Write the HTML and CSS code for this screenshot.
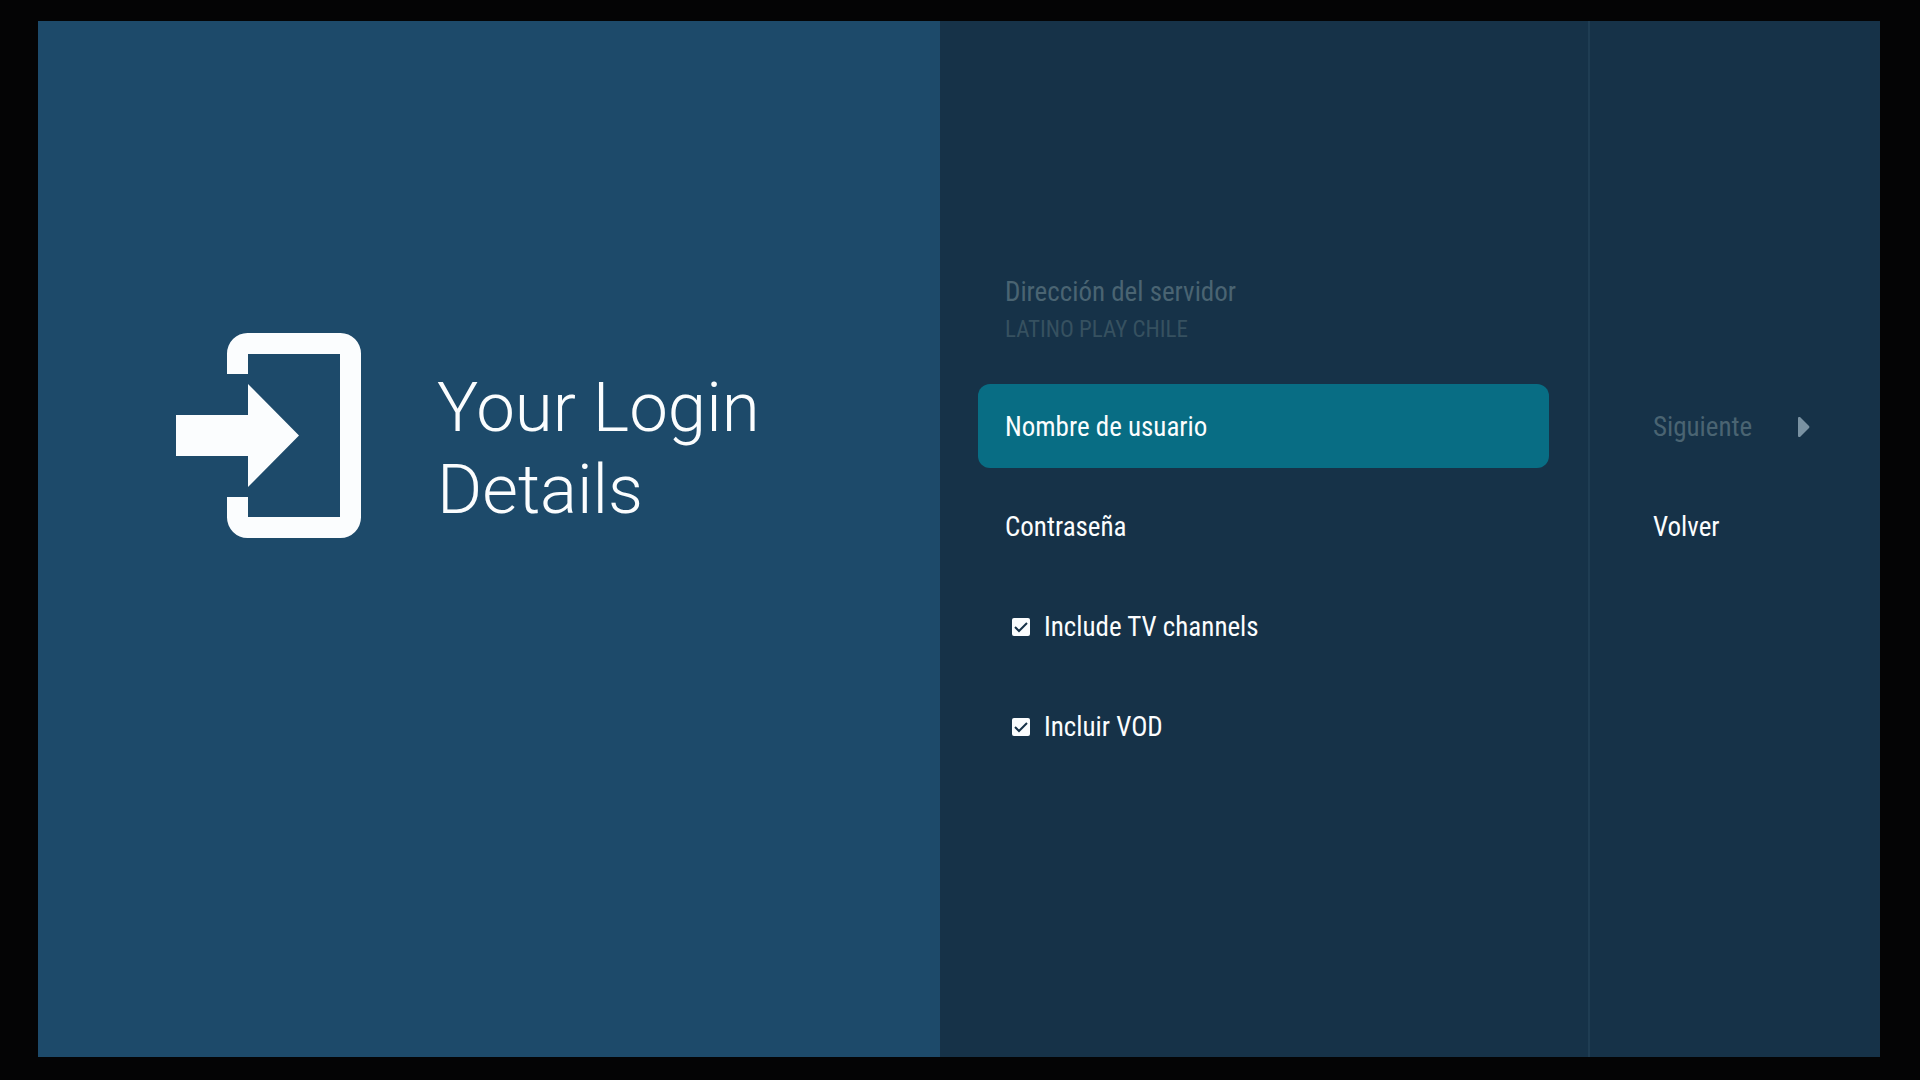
FILE: index.html
```html
<!DOCTYPE html>
<html lang="es">
<head>
<meta charset="utf-8">
<meta name="viewport" content="width=device-width, initial-scale=1">
<title>Your Login Details</title>
<link rel="stylesheet" href="styles.css">
</head>
<body>
<main class="screen">
  <section class="guidance">
    <svg class="login-icon" viewBox="0 0 185 205" aria-hidden="true">
      <path d="M51 41V20.5A20.5 20.5 0 0 1 71.5 0H164.500A20.500 20.500 0 0 1 185 20.500V184.500A20.500 20.500 0 0 1 164.500 205H71.500A20.500 20.500 0 0 1 51 184.500V164H72V184H164V21H72V41ZM0 82H72V51L123 102.500L72 154V123H0Z"/>
    </svg>
    <h1 class="title">Your Login Details</h1>
  </section>
  <form class="actions">
    <button class="action action-server" type="button" disabled>
      <span class="server-label">Dirección del servidor</span>
      <span class="server-name">LATINO PLAY CHILE</span>
    </button>
    <button class="action selected" type="button">Nombre de usuario</button>
    <button class="action" type="button">Contraseña</button>
    <label class="action option"><input class="check" type="checkbox" checked>Include TV channels</label>
    <label class="action option"><input class="check" type="checkbox" checked>Incluir VOD</label>
  </form>
  <nav class="steps">
    <button class="action next" type="button" disabled>
      <span class="next-label">Siguiente</span>
      <svg class="chevron" viewBox="0 0 12 20" aria-hidden="true"><path d="M0 1Q0 0 1 0L2 0L11 9Q12 10 11 11L2 20H1Q0 20 0 19Z"/></svg>
    </button>
    <button class="action" type="button">Volver</button>
  </nav>
</main>
</body>
</html>
```
FILE: styles.css
```css
* {
  box-sizing: border-box;
}

body {
  margin: 0;
  min-height: 100vh;
  padding: 21px 40px 23px 38px;
  display: flex;
  background: #040405;
  color: #fbfdfe;
  font-family: "Roboto Condensed", "Liberation Sans Narrow", Roboto, sans-serif;
  font-size: 27px;
  line-height: 32px;
}

.screen {
  flex: 1;
  display: grid;
  grid-template-columns: 902fr 648fr 292fr;
  background: #163248;
}

.guidance {
  display: flex;
  align-items: flex-start;
  gap: 76px;
  padding: 312px 100px 40px 138px;
  background: #1d4a6a;
}

.login-icon {
  flex: none;
  width: 185px;
  height: 205px;
  fill: #fbfdfe;
}

.title {
  margin: 0;
  padding-top: 34px;
  max-width: 400px;
  font-family: Roboto, sans-serif;
  font-size: 69px;
  font-weight: 300;
  line-height: 82px;
}

.actions {
  display: flex;
  flex-direction: column;
  gap: 16px;
  padding: 231px 39px 40px 38px;
}

.action {
  display: flex;
  align-items: center;
  width: 100%;
  min-height: 84px;
  padding: 1px 27px 0;
  border: 0;
  border-radius: 12px;
  background: none;
  color: inherit;
  font: inherit;
  text-align: left;
}

.selected {
  background: #086d84;
}

.action-server {
  flex-direction: column;
  align-items: flex-start;
  justify-content: center;
  gap: 6px;
  min-height: 116px;
}

.server-label,
.next-label {
  color: #4a6472;
}

.server-name {
  color: #365160;
  font-size: 23px;
}

.option {
  gap: 14px;
  padding-left: 34px;
}

.check {
  appearance: none;
  flex: none;
  width: 18px;
  height: 18px;
  margin: 0;
  border-radius: 2px;
  background: #fbfdfe;
}

.check:checked {
  background: #fbfdfe url("data:image/svg+xml,%3Csvg xmlns='http://www.w3.org/2000/svg' viewBox='0 0 18 18'%3E%3Cpath d='M3 9L7 13L15 5' fill='none' stroke='%23163248' stroke-width='2'/%3E%3C/svg%3E") center / 18px 18px no-repeat;
}

.steps {
  display: flex;
  flex-direction: column;
  gap: 16px;
  padding: 363px 43px 40px 36px;
  border-left: 2px solid #1f3d53;
}

.next {
  justify-content: space-between;
}

.chevron {
  width: 12px;
  height: 20px;
  fill: #7a92a2;
}
```
